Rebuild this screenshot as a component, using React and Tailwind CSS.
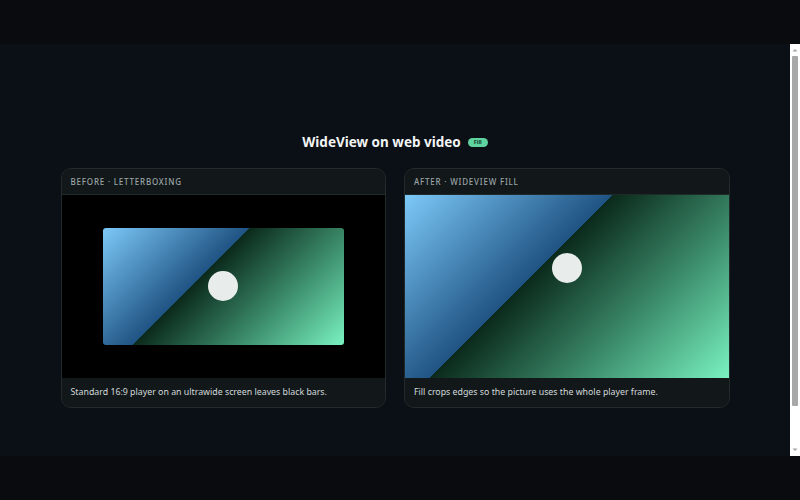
import React from 'react';

const picture =
  'bg-[linear-gradient(135deg,#7cc9f8_0%,#1f5383_41%,#0b2a1c_41%,#3f9270_72%,#79f2c0_100%)]';

function Card({ label, caption, children }) {
  return (
    <div className="rounded-[10px] border border-[#222b2c] bg-[#111618] overflow-hidden">
      <div className="h-[26px] px-[9px] flex items-center border-b border-[#1f2a2a] bg-[#121719] text-[8px] font-medium tracking-[0.1em] uppercase text-[#9aa4a6]">
        {label}
      </div>
      {children}
      <div className="h-[29px] px-[9px] pt-[1px] flex items-center text-[8.8px] text-[#d3d9da] bg-[#12181a]">
        {caption}
      </div>
    </div>
  );
}

function Dot() {
  return <div className="w-[30px] h-[30px] rounded-full bg-[#e8ecea]" />;
}

function Scrollbar() {
  return (
    <div className="w-[10px] shrink-0 bg-white flex flex-col items-center">
      <svg width="10" height="12" viewBox="0 0 10 12" className="shrink-0">
        <path d="M2.5 7.5 L5 5 L7.5 7.5 Z" fill="#a3a3a3" />
      </svg>
      <div className="w-[6px] h-[350px] rounded-[1px] bg-[#a8a8a8]" />
      <div className="flex-1" />
      <svg width="10" height="12" viewBox="0 0 10 12" className="shrink-0">
        <path d="M2.5 4.5 L5 7 L7.5 4.5 Z" fill="#a3a3a3" />
      </svg>
    </div>
  );
}

export default function App() {
  return (
    <div className="h-[500px] w-[800px] overflow-hidden bg-[#0a0b0e] flex flex-col" style={{ fontFamily: '"Noto Sans", "Open Sans", sans-serif' }}>
      <div className="h-[44px] shrink-0" />
      <div className="h-[412px] shrink-0 flex bg-[#0b0f16]">
        <div className="flex-1 overflow-hidden">
          <div className="pt-[88px]">
            <div className="flex items-center justify-center gap-[7px] h-[20px]">
              <h1 className="text-[13.5px] font-bold text-[#f2f5f4] leading-5">WideView on web video</h1>
              <span className="h-[9px] px-[6px] rounded-full bg-[#5fd3a0] text-[#0d3b27] text-[5.5px] font-bold leading-[9px]">Fill</span>
            </div>
            <div className="mt-[16px] mx-auto w-[669px] grid grid-cols-2 gap-[18px]">
              <Card label="Before · Letterboxing" caption="Standard 16:9 player on an ultrawide screen leaves black bars.">
                <div className="h-[183px] bg-black flex items-center justify-center">
                  <div className={`w-[74.5%] h-[64%] rounded-[3px] flex items-center justify-center ${picture}`}>
                    <Dot />
                  </div>
                </div>
              </Card>
              <Card label="After · WideView fill" caption="Fill crops edges so the picture uses the whole player frame.">
                <div className={`h-[183px] relative ${picture}`}>
                  <div className="absolute left-1/2 top-[40%] -translate-x-1/2 -translate-y-1/2">
                    <Dot />
                  </div>
                </div>
              </Card>
            </div>
          </div>
        </div>
        <Scrollbar />
      </div>
    </div>
  );
}
